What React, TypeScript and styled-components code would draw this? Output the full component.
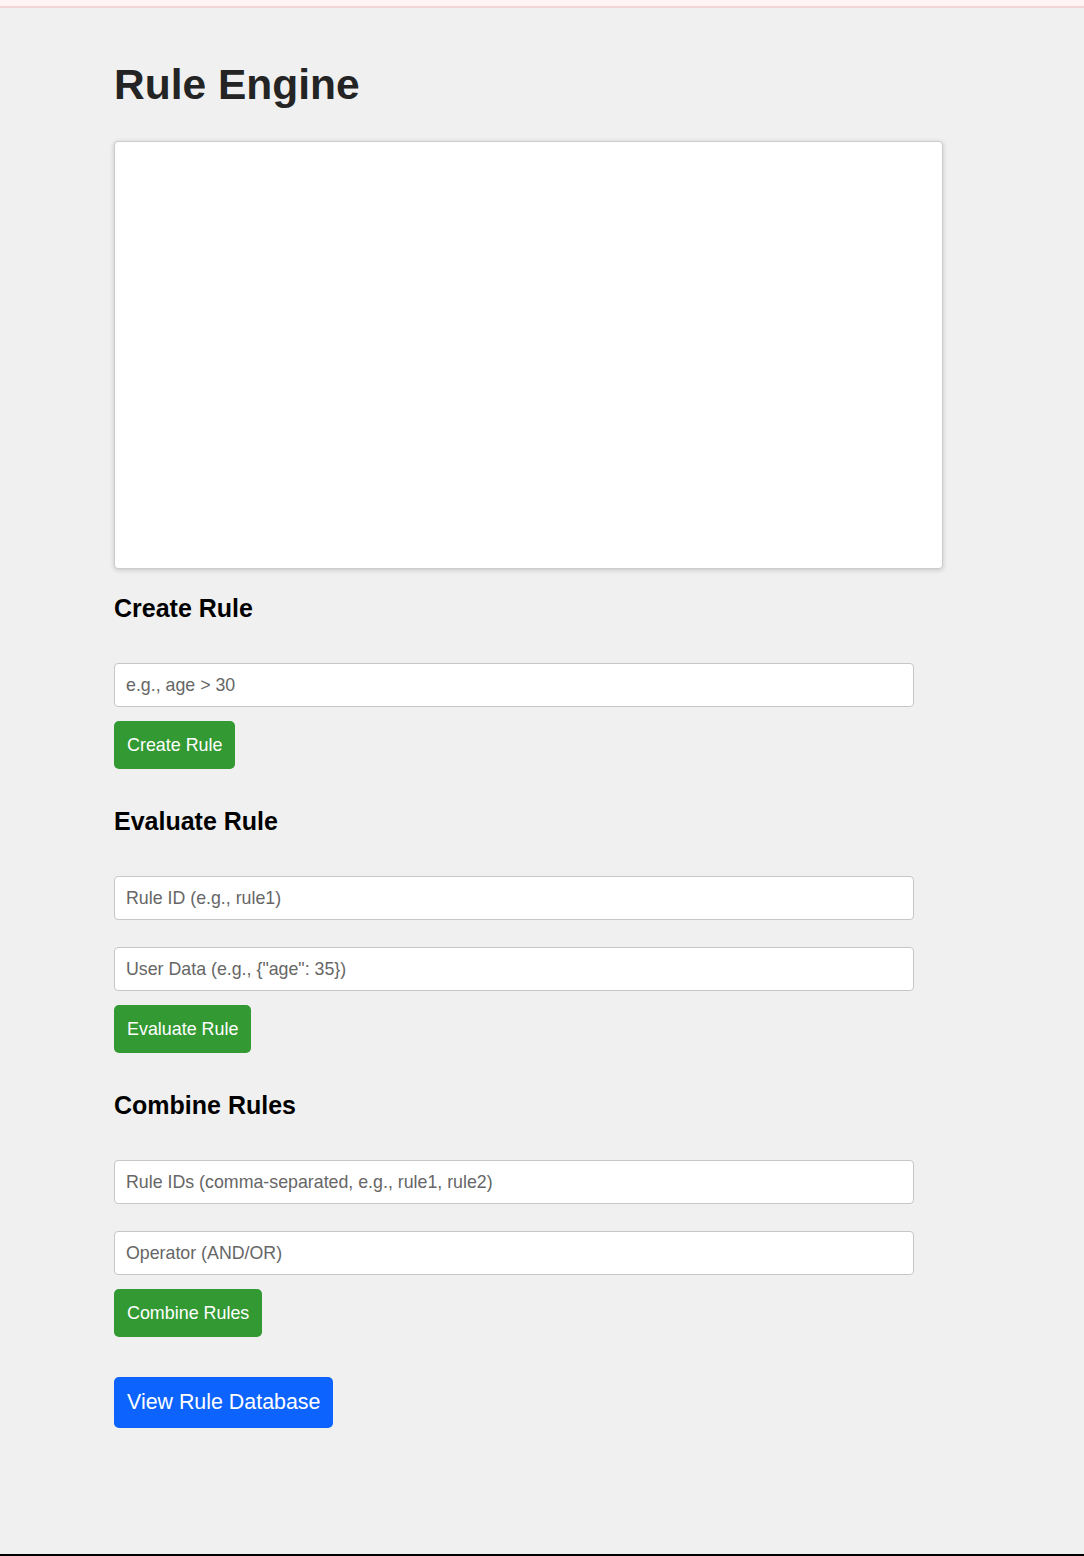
import React from "react";
import styled, { createGlobalStyle } from "styled-components";

const GlobalStyle = createGlobalStyle`
  html, body {
    margin: 0;
    padding: 0;
  }
  body {
    background: #f0f0f0;
    font-family: "Liberation Sans", Arial, Helvetica, sans-serif;
  }
`;

const Page = styled.div`
  min-height: 1556px;
  box-sizing: border-box;
  display: flex;
  flex-direction: column;
  background: #f0f0f0;
  border-bottom: 2px solid #000;
`;

const TopBar = styled.div`
  height: 6px;
  background: #fff4f3;
  border-bottom: 2px solid #f0d4d6;
`;

const Main = styled.main`
  flex: 1;
  padding: 54px 0 0 114px;
  display: flex;
  flex-direction: column;
  align-items: flex-start;
`;

const Title = styled.h1`
  margin: 0;
  font-size: 42.5px;
  line-height: 46px;
  font-weight: 700;
  color: #242424;
`;

const Canvas = styled.div`
  margin-top: 33px;
  width: 829px;
  height: 428px;
  box-sizing: border-box;
  background: #fff;
  border: 1px solid #cccccc;
  border-radius: 4px;
  box-shadow: 0 1px 5px rgba(0, 0, 0, 0.18);
`;

const Section = styled.section<{ $first?: boolean }>`
  margin-top: ${(p) => (p.$first ? "25px" : "38px")};
  display: flex;
  flex-direction: column;
  align-items: flex-start;
`;

const Heading = styled.h2`
  margin: 0 0 41px;
  font-size: 25px;
  line-height: 28px;
  font-weight: 700;
  color: #000;
`;

const Fields = styled.div`
  display: flex;
  flex-direction: column;
  gap: 27px;
`;

const Input = styled.input`
  width: 800px;
  height: 44px;
  box-sizing: border-box;
  padding: 0 11px;
  border: 1px solid #c6c6c6;
  border-radius: 4px;
  background: #fff;
  font-family: "Liberation Sans", Arial, Helvetica, sans-serif;
  font-size: 17.8px;
  color: #222;
  outline: none;
  &::placeholder {
    color: #666666;
  }
`;

const Button = styled.button<{ $variant?: "green" | "blue" }>`
  margin-top: ${(p) => (p.$variant === "blue" ? "40px" : "14px")};
  height: ${(p) => (p.$variant === "blue" ? "51px" : "48px")};
  padding: 0 13px;
  border: none;
  border-radius: 5px;
  background: ${(p) => (p.$variant === "blue" ? "#0d63fe" : "#339933")};
  color: #fff;
  font-family: "Liberation Sans", Arial, Helvetica, sans-serif;
  font-size: ${(p) => (p.$variant === "blue" ? "21.4px" : "17.9px")};
  cursor: pointer;
`;

export default function App() {
  return (
    <>
      <GlobalStyle />
      <Page>
        <TopBar />
        <Main>
          <Title>Rule Engine</Title>
          <Canvas />
          <Section $first>
            <Heading>Create Rule</Heading>
            <Fields>
              <Input placeholder="e.g., age > 30" />
            </Fields>
            <Button>Create Rule</Button>
          </Section>
          <Section>
            <Heading>Evaluate Rule</Heading>
            <Fields>
              <Input placeholder="Rule ID (e.g., rule1)" />
              <Input placeholder='User Data (e.g., {"age": 35})' />
            </Fields>
            <Button>Evaluate Rule</Button>
          </Section>
          <Section>
            <Heading>Combine Rules</Heading>
            <Fields>
              <Input placeholder="Rule IDs (comma-separated, e.g., rule1, rule2)" />
              <Input placeholder="Operator (AND/OR)" />
            </Fields>
            <Button>Combine Rules</Button>
          </Section>
          <Button $variant="blue">View Rule Database</Button>
        </Main>
      </Page>
    </>
  );
}
